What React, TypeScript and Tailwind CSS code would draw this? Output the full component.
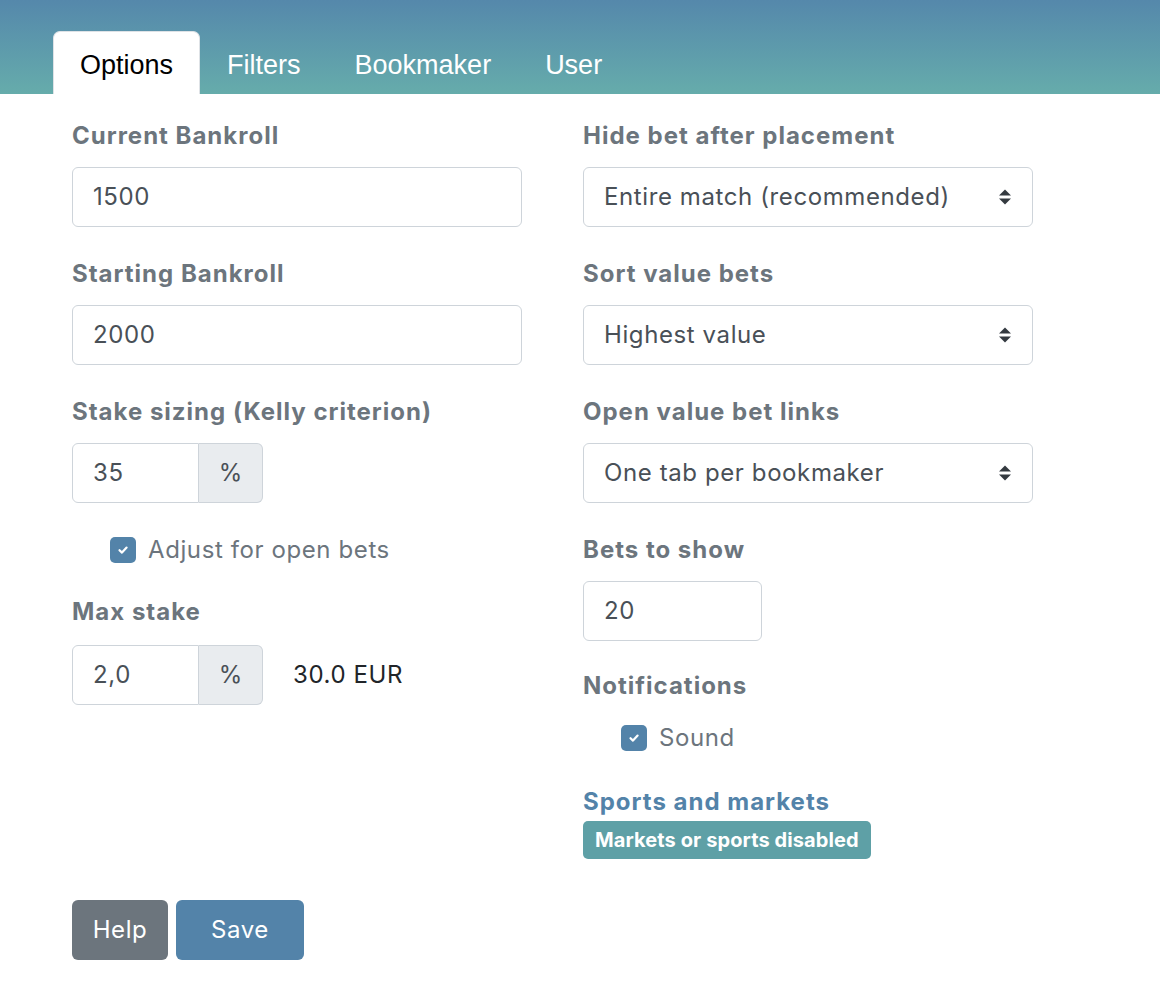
import React from 'react';

const label = 'block text-[24px] leading-[33px] font-bold tracking-[1px] text-[#6c757d] mb-[15px]';
const input =
  'block w-full h-[60px] px-[20px] text-[24px] tracking-[0.6px] text-[#495057] bg-white border border-[#ced4da] rounded-[6px] outline-none';

function SelectArrows() {
  return (
    <svg width="16" height="20" viewBox="0 0 16 20" className="shrink-0">
      <path d="M2 8.5 L8 2.5 L14 8.5 Z" fill="#343a40" />
      <path d="M2 11.5 L8 17.5 L14 11.5 Z" fill="#343a40" />
    </svg>
  );
}

function Select({ value }: { value: string }) {
  return (
    <div className="flex items-center justify-between w-full h-[60px] pl-[20px] pr-[19px] text-[24px] tracking-[0.6px] text-[#495057] bg-white border border-[#ced4da] rounded-[6px]">
      <span>{value}</span>
      <SelectArrows />
    </div>
  );
}

function Checkbox({ text }: { text: string }) {
  return (
    <div className="flex items-center gap-[12px] h-[33px]">
      <span className="w-[26px] h-[26px] rounded-[5px] bg-[#5383a9] flex items-center justify-center">
        <svg width="14" height="14" viewBox="0 0 14 14">
          <path d="M3.5 7.2 L6 9.6 L10.6 4.6" stroke="white" strokeWidth="2.2" fill="none" strokeLinecap="round" strokeLinejoin="round" />
        </svg>
      </span>
      <span className="text-[24px] tracking-[0.6px] text-[#6c757d]">{text}</span>
    </div>
  );
}

function PercentGroup({ value }: { value: string }) {
  return (
    <div className="flex h-[60px] w-[191px]">
      <div className="flex items-center w-[127px] px-[20px] text-[24px] tracking-[0.6px] text-[#495057] bg-white border border-[#ced4da] rounded-l-[6px]">
        {value}
      </div>
      <div className="flex items-center justify-center w-[64px] text-[24px] text-[#495057] bg-[#e9ecef] border border-l-0 border-[#ced4da] rounded-r-[6px]">
        %
      </div>
    </div>
  );
}

export default function App() {
  const tabs = ['Options', 'Filters', 'Bookmaker', 'User'];
  return (
    <div className="w-[1160px] min-h-[1000px] bg-white" style={{ fontFamily: 'Inter, "Noto Sans", sans-serif' }}>
      <div className="h-[94px] bg-gradient-to-b from-[#5588ab] to-[#66acab] flex items-end pl-[53px]">
        {tabs.map((t, i) =>
          i === 0 ? (
            <div
              key={t}
              className="h-[63px] pt-[5px] px-[26px] flex items-center bg-white border border-b-0 border-[#dee2e6] rounded-t-[7px] text-[27px] text-black"
              style={{ fontFamily: '"Liberation Sans", Arial, sans-serif' }}
            >
              {t}
            </div>
          ) : (
            <div
              key={t}
              className="h-[63px] pt-[5px] px-[27px] flex items-center text-[27px] text-white"
              style={{ fontFamily: '"Liberation Sans", Arial, sans-serif' }}
            >
              {t}
            </div>
          )
        )}
      </div>

      <div className="px-[72px] pt-[25px]">
        <div className="grid grid-cols-[450px_450px] gap-x-[61px]">
          {/* left column */}
          <div>
            <label className={label}>Current Bankroll</label>
            <div className={input + ' flex items-center'}>1500</div>
            <div className="h-[30px]" />
            <label className={label}>Starting Bankroll</label>
            <div className={input + ' flex items-center'}>2000</div>
            <div className="h-[30px]" />
            <label className={label}>Stake sizing (Kelly criterion)</label>
            <PercentGroup value="35" />
            <div className="mt-[30px] pl-[38px]">
              <Checkbox text="Adjust for open bets" />
            </div>
            <div className="h-[29px]" />
            <label className={label + ' !mb-[17px]'}>Max stake</label>
            <div className="flex items-center gap-[30px]">
              <PercentGroup value="2,0" />
              <span className="text-[24px] tracking-[0.6px] text-[#212529]">30.0 EUR</span>
            </div>
          </div>

          {/* right column */}
          <div>
            <label className={label}>Hide bet after placement</label>
            <Select value="Entire match (recommended)" />
            <div className="h-[30px]" />
            <label className={label}>Sort value bets</label>
            <Select value="Highest value" />
            <div className="h-[30px]" />
            <label className={label}>Open value bet links</label>
            <Select value="One tab per bookmaker" />
            <div className="h-[30px]" />
            <label className={label}>Bets to show</label>
            <div className={input + ' !w-[179px] flex items-center'}>20</div>
            <div className="h-[28px]" />
            <label className={label + ' !mb-[19px]'}>Notifications</label>
            <div className="pl-[38px]">
              <Checkbox text="Sound" />
            </div>
            <div className="mt-[31px] text-[24px] leading-[33px] font-bold tracking-[1px] text-[#5383a9]">
              Sports and markets
            </div>
            <div className="mt-[3px] inline-flex items-center h-[38px] px-[12px] rounded-[5px] bg-[#5ea0a6] text-white text-[20px] tracking-[0.1px] font-bold">
              Markets or sports disabled
            </div>
          </div>
        </div>

        <div className="flex gap-[8px] mt-[41px]">
          <button className="h-[60px] w-[96px] rounded-[6px] bg-[#6c757d] text-white text-[24px] tracking-[0.6px]">Help</button>
          <button className="h-[60px] w-[128px] rounded-[6px] bg-[#5383a9] text-white text-[24px] tracking-[0.6px]">Save</button>
        </div>
      </div>
    </div>
  );
}
